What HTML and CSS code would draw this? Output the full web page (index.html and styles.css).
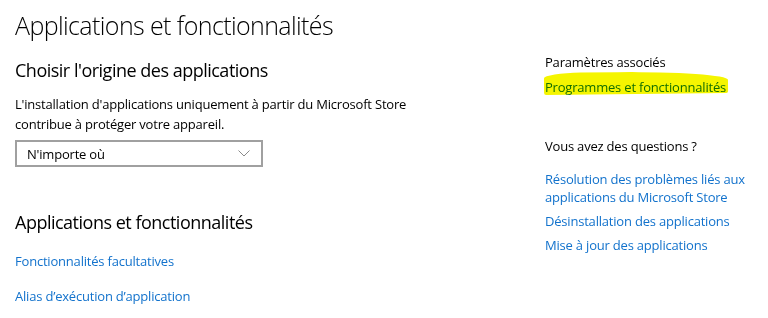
FILE: index.html
```html
<!DOCTYPE html>
<html lang="fr">
<head>
    <meta charset="UTF-8">
    <title>Applications et fonctionnalités</title>
    <link rel="stylesheet" href="styles.css">
</head>
<body>
    <div class="page">
        <main class="main">
            <h1 class="title">Applications et fonctionnalités</h1>
            <h2 class="section-title">Choisir l'origine des applications</h2>
            <p class="description">L'installation d'applications uniquement à partir du Microsoft Store<br>contribue à protéger votre appareil.</p>
            <div class="select">
                <span>N'importe où</span>
                <svg class="chevron" width="12" height="7" viewBox="0 0 12 7"><path d="M0.5 0.5 L6 6 L11.5 0.5" fill="none" stroke="#8a8a8a" stroke-width="1"/></svg>
            </div>
            <h2 class="section-title apps-title">Applications et fonctionnalités</h2>
            <div class="link-list">
                <a class="link" href="#">Fonctionnalités facultatives</a>
                <a class="link" href="#">Alias d’exécution d’application</a>
            </div>
        </main>
        <aside class="side">
            <div class="side-heading">Paramètres associés</div>
            <a class="link highlighted" href="#"><span class="marker"></span>Programmes et fonctionnalités</a>
            <div class="side-heading questions">Vous avez des questions ?</div>
            <div class="side-links">
                <a class="link" href="#">Résolution des problèmes liés aux<br>applications du Microsoft Store</a>
                <a class="link" href="#">Désinstallation des applications</a>
                <a class="link" href="#">Mise à jour des applications</a>
            </div>
        </aside>
    </div>
</body>
</html>
```

FILE: styles.css
```css
body, html {
    margin: 0;
    padding: 0;
    background: #ffffff;
    color: #000000;
    font-family: "Open Sans", "Noto Sans", sans-serif;
}

.page {
    display: flex;
    height: 318px;
    overflow: hidden;
}

.main {
    width: 530px;
    padding-left: 15px;
}

.title {
    margin: 8px 0 0;
    font-size: 25px;
    font-weight: 300;
    line-height: 34px;
    letter-spacing: -0.6px;
}

.section-title {
    margin: 15px 0 0;
    font-size: 18px;
    font-weight: 400;
    line-height: 26px;
    letter-spacing: -0.5px;
}

.description {
    margin: 11px 0 0;
    font-size: 13px;
    line-height: 20px;
    letter-spacing: -0.2px;
}

.select {
    display: flex;
    align-items: center;
    justify-content: space-between;
    box-sizing: border-box;
    width: 248px;
    height: 27px;
    margin-top: 6px;
    padding: 0 11px 0 10px;
    border: 2px solid #a0a0a0;
    font-size: 13px;
    letter-spacing: -0.2px;
}

.apps-title {
    margin-top: 42px;
}

.link {
    color: #1272cc;
    text-decoration: none;
    font-size: 13px;
    letter-spacing: -0.2px;
}

.link-list {
    display: flex;
    flex-direction: column;
    align-items: flex-start;
    gap: 15px;
    margin-top: 16px;
    line-height: 20px;
}

.side-heading {
    margin-top: 52px;
    font-size: 13px;
    line-height: 20px;
    letter-spacing: -0.2px;
}

.highlighted {
    position: relative;
    display: inline-block;
    margin-top: 5px;
    line-height: 20px;
}

/* yellow highlighter stroke over the link */
.marker {
    position: absolute;
    left: -1px;
    right: -2px;
    top: -5px;
    bottom: 3px;
    background: #f5f500;
    border-radius: 20% 60% 2px 2px / 25% 40% 2px 2px;
    mix-blend-mode: multiply;
    transform: rotate(-0.6deg);
}

.questions {
    margin-top: 39px;
}

.side-links {
    display: flex;
    flex-direction: column;
    align-items: flex-start;
    gap: 6px;
    margin-top: 14px;
    line-height: 18px;
}
```
